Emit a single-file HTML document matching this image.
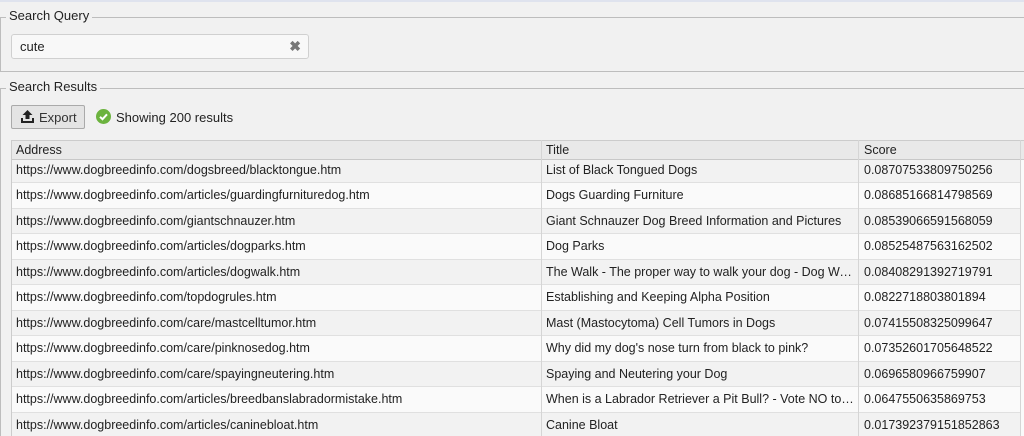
<!DOCTYPE html><html><head><style>
*{margin:0;padding:0;box-sizing:border-box}
body{width:1024px;height:436px;overflow:hidden;background:#f1f1f1;font-family:"Liberation Sans",sans-serif;font-size:12.5px;color:#222;position:relative}
.abs{position:absolute}
.hl{position:absolute;left:0;right:0;height:1px;background:#bdbdbd}
.leg{position:absolute;left:6px;background:#f1f1f1;padding:0 3px;font-size:13px;color:#222}
.tbl{position:absolute;left:11px;top:140px;width:1013px;height:296px;overflow:hidden;background:#fafafa;border-left:1px solid #ccc}
.row{position:absolute;left:0;width:1009px;height:25.5px;border-bottom:1px solid #e0e0e0}
.row span,.hdr span{position:absolute;top:0;line-height:24px;white-space:nowrap;overflow:hidden}
.c1{left:4px;width:520px}.c2{left:534px;width:310px;text-overflow:ellipsis}.c3{left:852px}
.hdr{position:absolute;left:0;top:0;width:1013px;height:20px;background:#e9e9e9;border-top:1px solid #ccc;border-bottom:1px solid #c8c8c8;z-index:2}
.hdr span{line-height:19px}
.vl{position:absolute;top:0;bottom:0;width:1px;background:#d5d5d5;z-index:3}
</style></head><body>
<div class="abs" style="left:0;top:0;width:1024px;height:2px;background:#dfe3ee"></div>
<div class="hl" style="top:17px"></div>
<div class="leg" style="top:8px">Search Query</div>
<div class="abs" style="left:0;top:17px;width:1px;height:54px;background:#bdbdbd"></div>
<div class="abs" style="left:11px;top:34px;width:298px;height:25px;background:#f8f8f8;border:1px solid #d0d0d0;border-radius:3px"><span class="abs" style="left:8px;top:4px;font-size:13px">cute</span><span class="abs" style="right:7px;top:3px;color:#777;font-weight:bold;font-size:14px">✖</span></div>
<div class="hl" style="top:71px"></div>
<div class="hl" style="top:88px"></div>
<div class="leg" style="top:79px">Search Results</div>
<div class="abs" style="left:0;top:88px;width:1px;height:348px;background:#bdbdbd"></div>
<div class="abs" style="left:11px;top:105px;width:74px;height:24px;background:#e4e4e4;border:1px solid #aaa;border-radius:2px">
<svg class="abs" style="left:8px;top:4px" width="15" height="14" viewBox="0 0 15 14"><path d="M7.5 0L2.5 5H5.5V9H9.5V5H12.5Z" fill="#222"/><path d="M1 8V13H14V8H12V11H3V8Z" fill="#222"/></svg>
<span class="abs" style="left:27px;top:4px;font-size:13px;color:#333">Export</span></div>
<svg class="abs" style="left:96px;top:109px" width="15" height="15"><circle cx="7.5" cy="7.5" r="7.5" fill="#6cb33f"/><path d="M4 7.8L6.5 10.2L11 5.3" stroke="#fff" stroke-width="2" fill="none"/></svg>
<span class="abs" style="left:116px;top:110px;font-size:13px">Showing 200 results</span>
<div class="tbl">
<div class="hdr"><span class="c1">Address</span><span class="c2" style="left:534px">Title</span><span class="c3">Score</span></div>
<div class="vl" style="left:529px"></div><div class="vl" style="left:846px"></div><div class="vl" style="left:1008px"></div>
<div class="row" style="top:17.5px;background:#f2f2f2"><span class="c1">https://www.dogbreedinfo.com/dogsbreed/blacktongue.htm</span><span class="c2">List of Black Tongued Dogs</span><span class="c3">0.08707533809750256</span></div>
<div class="row" style="top:43px"><span class="c1">https://www.dogbreedinfo.com/articles/guardingfurnituredog.htm</span><span class="c2">Dogs Guarding Furniture</span><span class="c3">0.08685166814798569</span></div>
<div class="row" style="top:68.5px;background:#f2f2f2"><span class="c1">https://www.dogbreedinfo.com/giantschnauzer.htm</span><span class="c2">Giant Schnauzer Dog Breed Information and Pictures</span><span class="c3">0.08539066591568059</span></div>
<div class="row" style="top:94px"><span class="c1">https://www.dogbreedinfo.com/articles/dogparks.htm</span><span class="c2">Dog Parks</span><span class="c3">0.08525487563162502</span></div>
<div class="row" style="top:119.5px;background:#f2f2f2"><span class="c1">https://www.dogbreedinfo.com/articles/dogwalk.htm</span><span class="c2">The Walk - The proper way to walk your dog - Dog Walking</span><span class="c3">0.08408291392719791</span></div>
<div class="row" style="top:145px"><span class="c1">https://www.dogbreedinfo.com/topdogrules.htm</span><span class="c2">Establishing and Keeping Alpha Position</span><span class="c3">0.0822718803801894</span></div>
<div class="row" style="top:170.5px;background:#f2f2f2"><span class="c1">https://www.dogbreedinfo.com/care/mastcelltumor.htm</span><span class="c2">Mast (Mastocytoma) Cell Tumors in Dogs</span><span class="c3">0.07415508325099647</span></div>
<div class="row" style="top:196px"><span class="c1">https://www.dogbreedinfo.com/care/pinknosedog.htm</span><span class="c2">Why did my dog's nose turn from black to pink?</span><span class="c3">0.07352601705648522</span></div>
<div class="row" style="top:221.5px;background:#f2f2f2"><span class="c1">https://www.dogbreedinfo.com/care/spayingneutering.htm</span><span class="c2">Spaying and Neutering your Dog</span><span class="c3">0.0696580966759907</span></div>
<div class="row" style="top:247px"><span class="c1">https://www.dogbreedinfo.com/articles/breedbanslabradormistake.htm</span><span class="c2">When is a Labrador Retriever a Pit Bull? - Vote NO to BSL</span><span class="c3">0.0647550635869753</span></div>
<div class="row" style="top:272.5px;background:#f2f2f2"><span class="c1">https://www.dogbreedinfo.com/articles/caninebloat.htm</span><span class="c2">Canine Bloat</span><span class="c3">0.017392379151852863</span></div>
</div>
</body></html>
